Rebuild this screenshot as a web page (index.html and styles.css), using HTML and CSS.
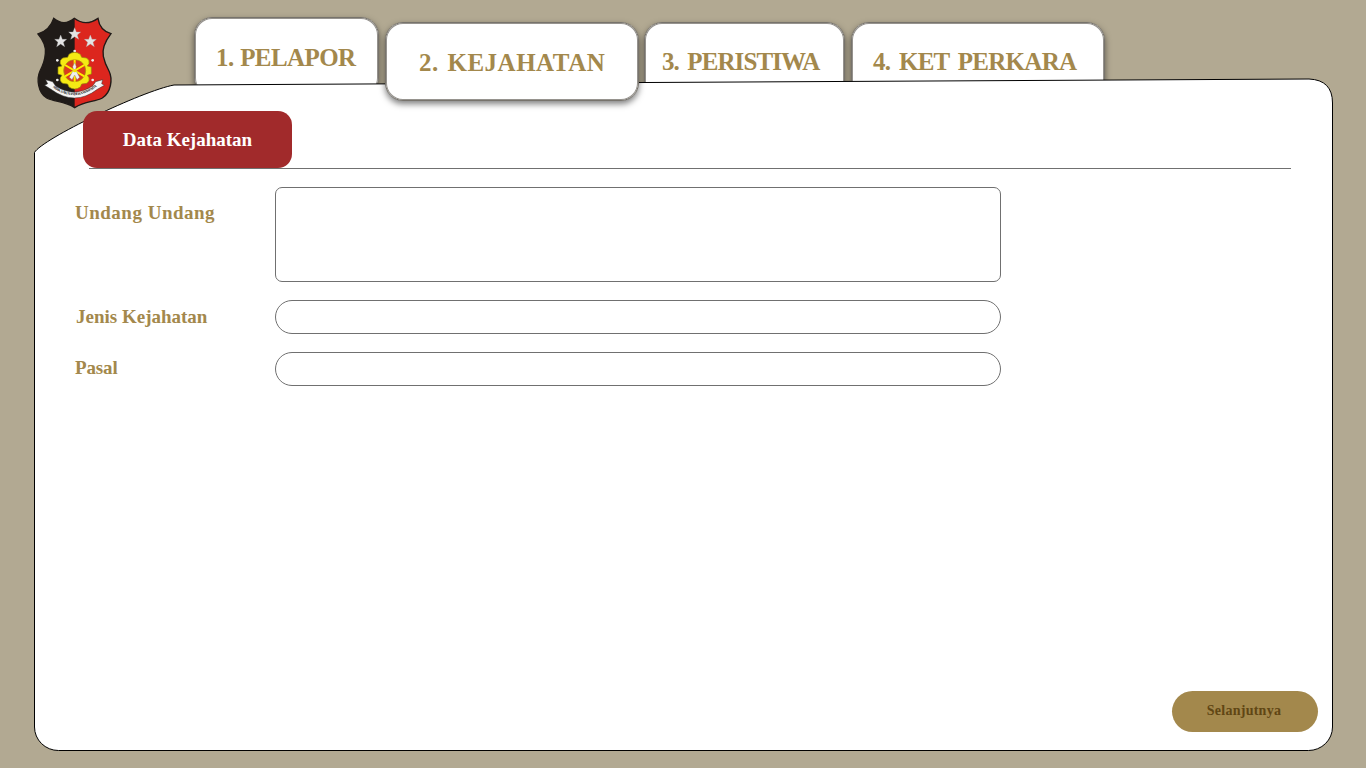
FILE: index.html
```html
<!DOCTYPE html>
<html lang="id">
<head>
<meta charset="utf-8">
<title>Data Kejahatan</title>
<link rel="stylesheet" href="styles.css">
</head>
<body>
<div class="page">
  <header class="header">
    <svg class="logo" viewBox="0 0 240 294" aria-label="Reserse">
      <defs>
        <path id="shield" d="M59 13Q90 39 121 13Q155 39 192 13Q197 49 231 59Q202 97 208 127Q212 147 225 171C237 195 231 236 205 252C180 265 154 260 122 281C90 260 64 265 38 252C12 236 7 195 18 171Q32 145 34 119Q38 90 12 60Q48 48 59 13Z"/>
        <clipPath id="right"><path d="M122 0H240V294H122Z"/></clipPath>
        <path id="star" d="M0-19L5-6L18-6L8 3L12 16L0 8L-12 16L-8 3L-18-6L-5-6Z"/>
        <path id="motto" d="M56 220Q120 268 188 218"/>
      </defs>
      <use href="#shield" fill="#201b18"/>
      <use href="#shield" fill="#dc261e" clip-path="url(#right)"/>
      <use href="#shield" fill="none" stroke="#201b18" stroke-width="4"/>
      <g fill="#e4e4e4" stroke="#aaa" stroke-width="1"><use href="#star" x="122" y="60"/><use href="#star" x="80" y="82"/><use href="#star" x="169" y="82"/></g>
      <g fill="#eee"><circle cx="122" cy="111" r="4"/><circle cx="70" cy="139" r="4"/><circle cx="176" cy="139" r="4"/><circle cx="70" cy="198" r="4"/><circle cx="176" cy="198" r="4"/></g>
      <path d="M105 121Q122 109 139 121L143 130L158 132Q168 139 165 149L160 156L172 159V180L160 184L165 191Q168 201 158 208L143 210L139 219Q122 231 105 219L101 210L86 208Q76 201 79 191L84 184L72 180V159L84 156L79 149Q76 139 86 132L101 130Z" fill="#f5ea14" stroke="#94890a" stroke-width="2"/>
      <circle cx="122" cy="170" r="33" fill="#d93a1f" stroke="#a59a08" stroke-width="2"/>
      <path d="M122 137V203M93 153L151 187M93 187L151 153" stroke="#fff000" stroke-width="6"/>
      <path d="M122 146L127 158L124 167L137 190L129 197L122 183L114 197L106 190L119 167L116 158Z" fill="#eee" stroke="#777"/>
      <circle cx="122" cy="170" r="5" fill="#f3e300"/>
      <path d="M35 197L56 203L65 216Q120 253 176 216L185 203L206 197L203 209L211 214L190 226Q122 278 51 226L32 214L41 209Z" fill="#f4f4f4" stroke="#333" stroke-width="1.500"/>
      <text class="motto"><textPath href="#motto" textLength="144">SIDIK SAKTI INDERA WASPADA</textPath></text>
    </svg>
    <nav class="tabs">
      <a class="tab tab-reporter"><span>1. PELAPOR</span></a>
      <a class="tab tab-crime"><span>2. KEJAHATAN</span></a>
      <a class="tab tab-event"><span>3. PERISTIWA</span></a>
      <a class="tab tab-case"><span>4. KET PERKARA</span></a>
    </nav>
  </header>
  <svg class="sheet" viewBox="0 0 1366 768" aria-hidden="true">
    <path d="M34.500 152.500C42 139 142 91 174 85L1309 79Q1332.500 80 1332.500 103V727A24 23.500 0 0 1 1308.500 750.500H58.500A24 23.500 0 0 1 34.500 727Z" fill="#fff" stroke="#000"/>
  </svg>
  <main class="content">
    <div class="heading"><h1>Data Kejahatan</h1></div>
    <form class="form">
      <label class="law" for="law">Undang Undang</label><textarea id="law"></textarea>
      <label class="kind" for="kind">Jenis Kejahatan</label><input id="kind">
      <label class="article" for="article">Pasal</label><input id="article">
    </form>
    <button class="next">Selanjutnya</button>
  </main>
</div>
</body>
</html>
```
FILE: styles.css
```css
* { box-sizing: border-box; }
body { margin: 0; background: #b2a992; font-family: "Liberation Serif", serif; font-weight: 700; }
.page { position: relative; width: 1366px; height: 768px; overflow: hidden; display: flex; flex-direction: column; isolation: isolate; }
.header { display: flex; height: 111px; padding: 14px 0 0 34px; }
.logo { width: 80px; height: 98px; flex: none; }
.motto { font-size: 11px; fill: #111; }
.tabs { display: flex; align-items: flex-start; gap: 6px; margin-left: 80px; padding-top: 3px; }
.tab { height: 79px; margin-top: 5px; border: 1px solid #77736c; border-radius: 18px; background: #fff; color: #a3884c; font-size: 25px; line-height: 28px; white-space: nowrap; box-shadow: inset 0 0 0 1px #96938e, 0 3px 6px rgba(0,0,0,.5); }
.tab-reporter { width: 185px; margin-top: 0; padding: 26px 0 0 21px; letter-spacing: -.6px; word-spacing: 1px; }
.tab-crime { width: 254px; padding: 26px 0 0 33px; letter-spacing: .5px; word-spacing: 2px; z-index: 3; }
.tab-event { width: 201px; padding: 25px 0 0 17px; margin-left: -1px; letter-spacing: -.9px; word-spacing: 3px; }
.tab-case { width: 254px; padding: 25px 0 0 21px; letter-spacing: -.7px; word-spacing: 3px; }
.sheet { position: absolute; inset: 0; width: 1366px; height: 768px; z-index: 1; }
.content { display: flex; flex: 1; flex-direction: column; z-index: 2; padding: 0 48px 36px 75px; }
.heading { height: 58px; margin-left: 8px; background: linear-gradient(#707070, #707070) 6px 57px / 1202px 1px no-repeat; }
h1 { display: flex; align-items: center; justify-content: center; width: 209px; height: 57px; margin: 0; border-radius: 14px; background: #a12a2b; color: #fff; font-size: 19px; line-height: 22px; }
.form { display: grid; grid-template-columns: 200px 726px; grid-template-rows: 95px 34px 34px; row-gap: 18px; margin-top: 18px; color: #a3884c; font-size: 19px; line-height: 22px; }
.law { padding-top: 15px; letter-spacing: .5px; }
.kind { padding: 6px 0 0 1px; }
.article { padding-top: 5px; letter-spacing: -.15px; }
textarea, input { width: 726px; height: 34px; margin: 0; padding: 0 14px; border: 1px solid #707070; border-radius: 17px; background: #fff; outline: 0; resize: none; }
textarea { height: 95px; border-radius: 7px; }
.next { width: 146px; height: 41px; margin: auto 0 0 auto; padding: 0 2px 2px 0; border: 0; border-radius: 21px; background: #a3884c; color: #604614; font: 700 14px/18px "Liberation Serif", serif; letter-spacing: .25px; }
```
